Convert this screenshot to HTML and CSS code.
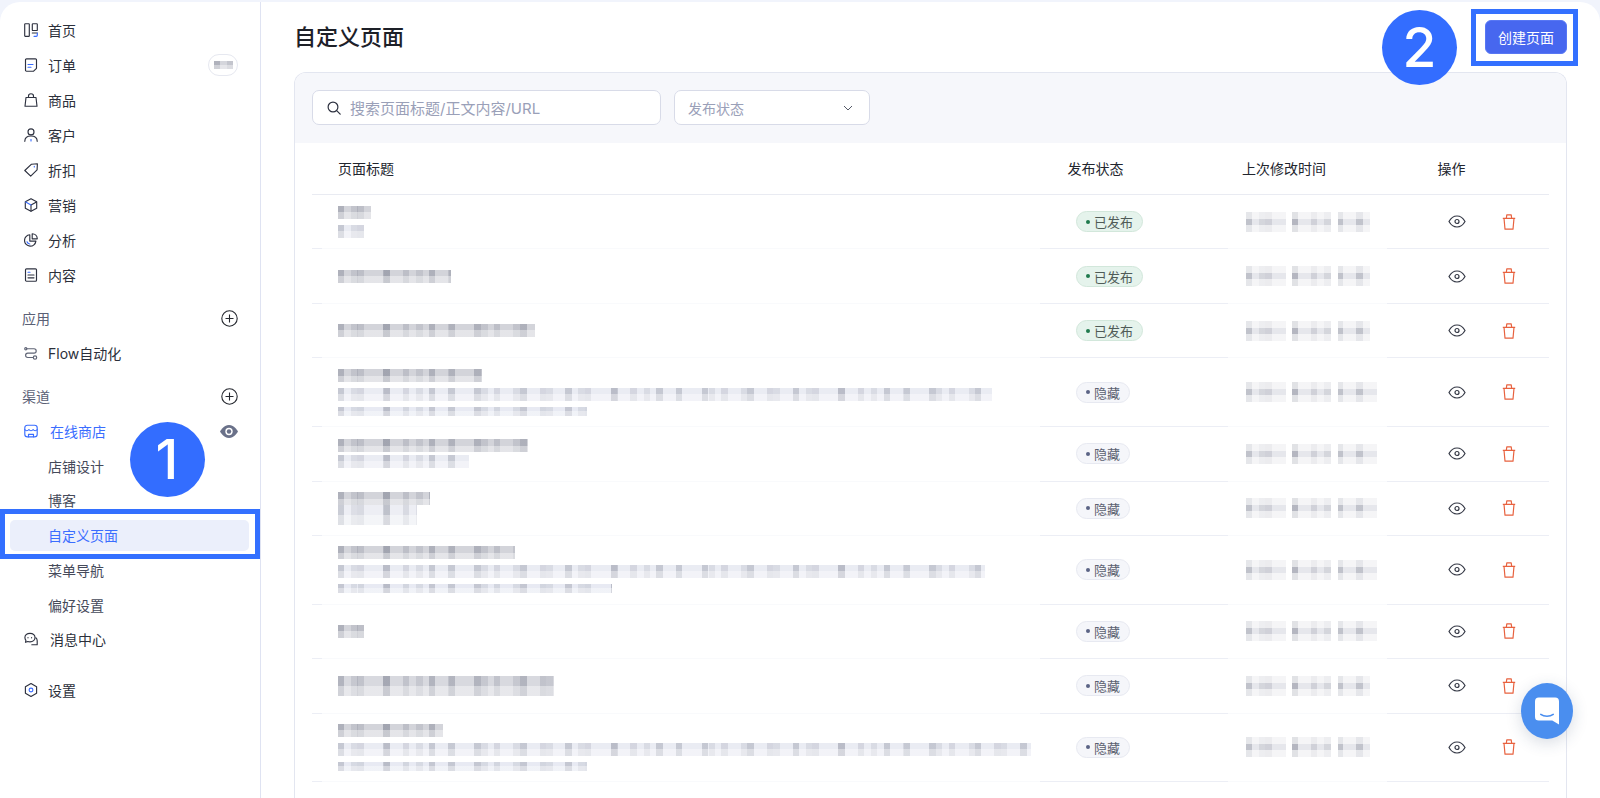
FILE: index.html
```html
<!DOCTYPE html>
<html lang="zh-CN">
<head>
<meta charset="utf-8">
<title>自定义页面</title>
<link rel="stylesheet" href="styles.css">
</head>
<body>
<svg class="defs" width="0" height="0" aria-hidden="true">
  <symbol id="eye" viewBox="0 0 18 13"><path d="M1 6.5S4 1 9 1s8 5.500 8 5.500S14 12 9 12 1 6.500 1 6.500z" fill="none" stroke="currentColor" stroke-width="1.200"/><circle cx="9" cy="6.500" r="2" fill="none" stroke="currentColor" stroke-width="1.200"/></symbol>
  <symbol id="trash" viewBox="0 0 14 16"><path d="M.8 4.300h12.400M2 4.300l1 10.900h8l1-10.900M4.300 4.300l.5-3.400h4.400l.5 3.400" fill="none" stroke="currentColor" stroke-width="1.200" stroke-linejoin="round"/></symbol>
  <symbol id="plus" viewBox="0 0 17 17"><circle cx="8.500" cy="8.500" r="7.700" fill="none" stroke="currentColor" stroke-width="1.100"/><path d="M4.500 8.500h8M8.500 4.500v8" stroke="currentColor" stroke-width="1.100"/></symbol>
</svg>
<div class="app">
  <aside class="sidebar">
    <nav class="nav">
      <a class="nav-item"><svg class="ico" viewBox="0 0 14 14"><rect x=".7" y=".7" width="4.600" height="12.600" rx=".6"/><rect x="8.300" y=".7" width="5" height="6.800" rx=".6"/><path d="M8.300 10h5"/><path class="acc" d="M13.300 10v2.300a1 1 0 01-1 1H10"/></svg><span>首页</span></a>
      <a class="nav-item"><svg class="ico" viewBox="0 0 14 14"><path d="M2.500.8h9a1 1 0 011 1v8.500l-2.900 2.900H2.500a1 1 0 01-1-1V1.800a1 1 0 011-1z"/><path class="acc" d="M4 6.500h5M4 9.200h3"/></svg><span>订单</span><span class="count"><i class="mz mz-count"></i></span></a>
      <a class="nav-item"><svg class="ico" viewBox="0 0 14 14"><path d="M2 4.500h10l1 8.700H1z"/><path d="M4.500 4.500V3a2.500 2.300 0 015 0v1.500"/></svg><span>商品</span></a>
      <a class="nav-item"><svg class="ico" viewBox="0 0 14 14"><circle cx="7" cy="3.900" r="3"/><path d="M.8 13.300c0-3.400 2.600-5.300 6.200-5.300s6.200 1.900 6.200 5.300"/><path class="acc" d="M7 11.500v1.500"/></svg><span>客户</span></a>
      <a class="nav-item"><svg class="ico" viewBox="0 0 14 14"><path d="M.8 7.500 7.500 1.200l5.900-.4-.3 6-6.400 6.400z"/><path class="acc" d="M10.300 3.400v.6"/></svg><span>折扣</span></a>
      <a class="nav-item"><svg class="ico" viewBox="0 0 14 14"><path d="M7 .7l5.700 3.100v6.400L7 13.300l-5.700-3.100V3.800z"/><path d="M7 7l5.500-3M7 7v6"/><path class="acc" d="M1.700 4.100 7 7"/></svg><span>营销</span></a>
      <a class="nav-item"><svg class="ico" viewBox="0 0 14 14"><path d="M5.800 1.800a5.700 5.700 0 106.100 6.300H5.800z"/><path d="M8.200.7a5.300 5.300 0 015.100 5.100H8.200z"/><path class="acc" d="M3 8.800a3.200 3.200 0 002.800 2.200"/></svg><span>分析</span></a>
      <a class="nav-item"><svg class="ico" viewBox="0 0 14 14"><rect x="1.500" y=".8" width="11" height="12.400" rx="1"/><path class="acc" d="M4 4.200h2"/><path d="M4 7h6M4 9.800h6"/></svg><span>内容</span></a>
    </nav>
    <section class="group group-apps">
      <div class="group-head"><span>应用</span><svg class="plus"><use href="#plus"/></svg></div>
      <a class="nav-item"><svg class="ico ico-flow" viewBox="0 0 14 14"><path d="M2.500 2.700h7.500a2.200 2.200 0 010 4.400H3.800a2.200 2.200 0 000 4.400h5"/><circle cx="1.800" cy="2.700" r="1.100"/><circle cx="11" cy="11.500" r="1.700"/></svg><span>Flow自动化</span></a>
    </section>
    <section class="group group-channels">
      <div class="group-head"><span>渠道</span><svg class="plus"><use href="#plus"/></svg></div>
      <a class="nav-item nav-item-wide nav-store"><svg class="ico ico-store" viewBox="0 0 14 14"><rect x=".8" y="1.200" width="12.400" height="11.600" rx="2.600"/><path d="M.8 5.500c1 1.600 3 1.600 4.100 0 1 1.600 3.200 1.600 4.200 0 1 1.600 3.100 1.600 4.100 0M4.500 12.800v-2.500h5v2.500"/></svg><span>在线商店</span><svg class="store-eye" viewBox="0 0 18 13"><path d="M0 6.500S3.500 0 9 0s9 6.500 9 6.500-3.500 6.500-9 6.500S0 6.500 0 6.500z"/><circle cx="9" cy="6.500" r="3.700" fill="#fff"/><circle cx="9" cy="6.500" r="2.200"/></svg></a>
      <a class="sub-item">店铺设计</a>
      <a class="sub-item">博客</a>
      <a class="sub-item sub-active">自定义页面<span class="mark mark-nav"></span></a>
      <a class="sub-item">菜单导航</a>
      <a class="sub-item">偏好设置</a>
      <a class="nav-item nav-item-wide nav-msg"><svg class="ico" viewBox="0 0 14 14"><path d="M6 1.300c2.900 0 5 1.900 5 4.300s-2.100 4.300-5 4.300c-.8 0-1.500-.1-2.100-.4L1.500 10.300l.4-2A4.200 4.200 0 01.9 5.600c0-2.400 2.200-4.300 5.100-4.300z"/><path d="M11.800 5.800c.9.700 1.400 1.700 1.400 2.900v4H7.800"/><path d="M4 5.600v.2M7.600 5.600v.2"/></svg><span>消息中心</span></a>
    </section>
    <a class="nav-item nav-settings"><svg class="ico" viewBox="0 0 14 14"><path d="M7 .6l5.600 3.200v6.400L7 13.400l-5.600-3.200V3.800z"/><circle class="acc" cx="7" cy="7" r="1.900"/></svg><span>设置</span></a>
    <span class="badge badge-one">1</span>
  </aside>

  <main class="main">
    <header class="page-head">
      <h1 class="page-title">自定义页面</h1>
      <div class="create">
        <span class="badge badge-two">2</span>
        <button class="btn-primary" type="button">创建页面</button>
        <span class="mark mark-btn"></span>
      </div>
    </header>

    <section class="card">
      <div class="filters">
        <label class="search">
          <svg class="search-ico" viewBox="0 0 14 14"><circle cx="6" cy="6" r="4.900"/><path d="M9.700 9.700l3.500 3.500"/></svg>
          <span>搜索页面标题/正文内容/URL</span>
        </label>
        <div class="select"><span>发布状态</span><svg class="chev" viewBox="0 0 10 6"><path d="M1 1l4 4 4-4"/></svg></div>
      </div>

      <div class="table">
        <div class="row row-head"><div class="c-title">页面标题</div><div>发布状态</div><div>上次修改时间</div><div>操作</div></div>

        <div class="row">
          <div class="c-title"><i class="mz mz-t" style="width:33px"></i><i class="mz mz-d gap" style="width:26px"></i></div>
          <div class="c-status"><span class="pill pill-on">已发布</span></div>
          <div><i class="mz mz-date" style="width:124px"></i></div>
          <div class="acts"><svg class="eye"><use href="#eye"/></svg><svg class="trash"><use href="#trash"/></svg></div>
        </div>
        <div class="row">
          <div class="c-title"><i class="mz mz-t" style="width:113px"></i></div>
          <div class="c-status"><span class="pill pill-on">已发布</span></div>
          <div><i class="mz mz-date" style="width:124px"></i></div>
          <div class="acts"><svg class="eye"><use href="#eye"/></svg><svg class="trash"><use href="#trash"/></svg></div>
        </div>
        <div class="row">
          <div class="c-title"><i class="mz mz-t" style="width:197px"></i></div>
          <div class="c-status"><span class="pill pill-on">已发布</span></div>
          <div><i class="mz mz-date" style="width:124px"></i></div>
          <div class="acts"><svg class="eye"><use href="#eye"/></svg><svg class="trash"><use href="#trash"/></svg></div>
        </div>
        <div class="row row-tall">
          <div class="c-title"><i class="mz mz-t" style="width:144px"></i><i class="mz mz-d gap" style="width:654px"></i><i class="mz mz-l gap" style="width:249px"></i></div>
          <div class="c-status"><span class="pill">隐藏</span></div>
          <div><i class="mz mz-date" style="width:131px"></i></div>
          <div class="acts"><svg class="eye"><use href="#eye"/></svg><svg class="trash"><use href="#trash"/></svg></div>
        </div>
        <div class="row">
          <div class="c-title"><i class="mz mz-t" style="width:190px"></i><i class="mz mz-d gap-s" style="width:131px"></i></div>
          <div class="c-status"><span class="pill">隐藏</span></div>
          <div><i class="mz mz-date" style="width:131px"></i></div>
          <div class="acts"><svg class="eye"><use href="#eye"/></svg><svg class="trash"><use href="#trash"/></svg></div>
        </div>
        <div class="row">
          <div class="c-title"><i class="mz mz-t" style="width:92px"></i><i class="mz mz-tall" style="width:79px"></i></div>
          <div class="c-status"><span class="pill">隐藏</span></div>
          <div><i class="mz mz-date" style="width:131px"></i></div>
          <div class="acts"><svg class="eye"><use href="#eye"/></svg><svg class="trash"><use href="#trash"/></svg></div>
        </div>
        <div class="row row-tall">
          <div class="c-title"><i class="mz mz-t" style="width:177px"></i><i class="mz mz-d gap" style="width:647px"></i><i class="mz mz-l gap" style="width:274px"></i></div>
          <div class="c-status"><span class="pill">隐藏</span></div>
          <div><i class="mz mz-date" style="width:131px"></i></div>
          <div class="acts"><svg class="eye"><use href="#eye"/></svg><svg class="trash"><use href="#trash"/></svg></div>
        </div>
        <div class="row">
          <div class="c-title"><i class="mz mz-t" style="width:26px"></i></div>
          <div class="c-status"><span class="pill">隐藏</span></div>
          <div><i class="mz mz-date" style="width:131px"></i></div>
          <div class="acts"><svg class="eye"><use href="#eye"/></svg><svg class="trash"><use href="#trash"/></svg></div>
        </div>
        <div class="row">
          <div class="c-title"><i class="mz mz-tall mz-tall-dark" style="width:216px"></i></div>
          <div class="c-status"><span class="pill">隐藏</span></div>
          <div><i class="mz mz-date" style="width:124px"></i></div>
          <div class="acts"><svg class="eye"><use href="#eye"/></svg><svg class="trash"><use href="#trash"/></svg></div>
        </div>
        <div class="row row-tall">
          <div class="c-title"><i class="mz mz-t" style="width:105px"></i><i class="mz mz-d gap" style="width:693px"></i><i class="mz mz-l gap" style="width:249px"></i></div>
          <div class="c-status"><span class="pill">隐藏</span></div>
          <div><i class="mz mz-date" style="width:124px"></i></div>
          <div class="acts"><svg class="eye"><use href="#eye"/></svg><svg class="trash"><use href="#trash"/></svg></div>
        </div>
      </div>
    </section>
  </main>

  <button class="chat" type="button" aria-label="chat">
    <svg viewBox="0 0 25 28"><path d="M4 0h17a4 4 0 014 4v24l-7-4H4a4 4 0 01-4-4V4a4 4 0 014-4z" fill="#fff"/><path d="M6 17.500c3.500 2.600 9.500 2.600 13 0" fill="none" stroke="#4a8eef" stroke-width="1.600" stroke-linecap="round"/></svg>
  </button>
</div>
</body>
</html>
```
FILE: styles.css
```css
* { box-sizing: border-box; }
html, body { margin: 0; height: 100%; }
body {
  background: #f1f4fc;
  font-family: Inter, "Noto Sans CJK SC", sans-serif;
  font-size: 14px;
  color: #2b2f3a;
  overflow: hidden;
}
.defs { position: absolute; }
.app {
  position: relative;
  display: flex;
  height: 796px;
  margin-top: 2px;
  background: #fff;
  border-radius: 20px 20px 0 0;
  overflow: hidden;
}

/* sidebar */
.sidebar {
  position: relative;
  flex: 0 0 261px;
  padding-top: 10.500px;
  border-right: 1px solid #dfe3f2;
}
.nav-item {
  display: flex;
  align-items: center;
  gap: 10px;
  height: 35px;
  padding: 0 22px 0 24px;
}
.nav-item-wide { gap: 12px; }
.ico {
  flex: 0 0 14px;
  width: 14px;
  height: 14px;
  fill: none;
  stroke: #2e3240;
  stroke-width: 1.150;
  stroke-linejoin: round;
  stroke-linecap: round;
}
.ico .acc { stroke: #3a6dff; }
.ico-flow { stroke: #5f6475; }
.ico-store { stroke: #3a6dff; }
.nav-store { color: #3a6dff; position: relative; }
.store-eye {
  margin-left: auto;
  width: 18px;
  height: 13px;
  fill: #6a7189;
}
.count {
  display: flex;
  align-items: center;
  justify-content: center;
  width: 30px;
  height: 22px;
  margin-left: auto;
  border: 1px solid #e6e8f0;
  border-radius: 11px;
}
.group-apps { margin-top: 8.500px; }
.group-apps .group-head { height: 34px; }
.group-channels { margin-top: 8.500px; }
.group-head {
  display: flex;
  align-items: center;
  justify-content: space-between;
  height: 35px;
  padding: 0 22px;
  color: #5a6075;
}
.group-apps .nav-item { margin-bottom: 2px; }
.plus { width: 17px; height: 17px; color: #25282f; }
.sub-item {
  display: flex;
  align-items: center;
  height: 34.600px;
  padding-left: 48px;
  color: #454a5a;
}
.sub-active {
  position: relative;
  height: 31px;
  margin: 2.300px 11px 2px 10px;
  padding-left: 38px;
  border-radius: 5px;
  background: #ebeffb;
  color: #3a6dff;
}
.nav-msg { height: 34.600px; }
.nav-settings { margin-top: 16px; }

/* annotations */
.mark { position: absolute; border: 5px solid #3370ff; pointer-events: none; }
.mark-nav { left: -10px; right: -10.500px; top: -11px; bottom: -8px; }
.mark-btn { left: -14.500px; right: -11px; top: -11px; bottom: -12px; }
.badge {
  position: absolute;
  display: flex;
  align-items: center;
  justify-content: center;
  width: 75px;
  height: 75px;
  border-radius: 50%;
  background: #336dff;
  color: #fff;
  font-family: Inter, sans-serif;
  font-size: 55px;
  font-weight: 550;
  line-height: 1;
}
.badge-one { left: 129.500px; top: 419.500px; }
.badge-two { right: calc(100% + 28px); top: -10.500px; }

/* main */
.main { flex: 1; min-width: 0; padding: 0 33px; }
.page-head {
  display: flex;
  align-items: center;
  justify-content: space-between;
  height: 70px;
}
.page-title { margin: 0; font-size: 22px; font-weight: 500; line-height: 1.3; color: #1d2028; }
.create { position: relative; display: flex; }
.btn-primary {
  width: 82px;
  height: 34px;
  padding: 0;
  border: 1px solid #5877f3;
  border-radius: 6px;
  background: #4767ef;
  color: #fff;
  font: inherit;
}

.card {
  height: 800px;
  border: 1px solid #e3e6f0;
  border-bottom: 0;
  border-radius: 12px 12px 0 0;
  background: #fff;
  overflow: hidden;
}
.filters {
  display: flex;
  gap: 13px;
  height: 70px;
  padding: 17px 17px 18px 17px;
  background: #f6f7fb;
  font-size: 15px;
  color: #9aa0b8;
}
.search, .select {
  display: flex;
  align-items: center;
  height: 35px;
  border: 1px solid #d8dbe8;
  border-radius: 7px;
  background: #fff;
}
.search { flex: 0 0 349px; gap: 9px; padding-left: 14px; }
.search-ico { width: 14px; height: 14px; fill: none; stroke: #2e3240; stroke-width: 1.200; stroke-linecap: round; }
.select { flex: 0 0 196px; justify-content: space-between; padding: 0 16px 0 13px; font-size: 14px; }
.chev { width: 10px; height: 6px; fill: none; stroke: #555a68; stroke-width: 1; }

/* table */
.table { padding: 0 17px; }
.row {
  display: grid;
  grid-template-columns: 755.500px 174.500px 195.500px 1fr;
  align-items: center;
  height: 54.500px;
  padding-bottom: 1.500px;
  background: linear-gradient(to right,
    #eceef5 0 10px, #f9fafc 10px 728px, #eceef5 728px 916px,
    #f9fafc 916px 1075px, #eceef5 1075px) bottom / 100% 1.200px no-repeat;
}
.row-tall { height: 68.700px; }
.row-head {
  height: 52px;
  padding-bottom: 3px;
  background: linear-gradient(#e9ebf2, #e9ebf2) bottom / 100% 1px no-repeat;
  color: #22252e;
}
.c-title { padding-left: 26px; }
.c-status { display: flex; }
.mz { display: block; }
.gap { margin-top: 6px; }
.gap-s { margin-top: 3px; }
.mz {
  background-color: #e9eaef;
  background-image:
    linear-gradient(to bottom, transparent 50%, rgba(255,255,255,.4) 50%),
    repeating-linear-gradient(90deg, rgba(90,95,115,.3) 0 6.500px, transparent 6.500px 19.500px, rgba(90,95,115,.18) 19.500px 26px, transparent 26px 45.500px),
    repeating-linear-gradient(90deg, transparent 0 13px, rgba(90,95,115,.14) 13px 19.500px, transparent 19.500px 32.500px);
}
.mz-t { height: 13px; background-color: #d3d4da; }
.mz-d { height: 13px; background-color: #e7e9f2; opacity: .85; }
.mz-l { height: 9px; background-color: #e4e7f1; opacity: .85; }
.mz-tall { height: 20px; background-color: #e9ebf2; opacity: .8; }
.mz-tall-dark { background-color: #d8d9df; opacity: 1; }
.mz-date {
  height: 20px;
  margin-left: 4px;
  background-color: #e4e5ea;
  opacity: .9;
  background-image:
    linear-gradient(90deg, transparent 40px, #fff 40px 46px, transparent 46px 85px, #fff 85px 92px, transparent 92px),
    linear-gradient(to bottom, rgba(255,255,255,.6) 33%, transparent 33% 66%, rgba(255,255,255,.6) 66%),
    repeating-linear-gradient(90deg, rgba(90,95,115,.3) 0 6.500px, transparent 6.500px 19.500px, rgba(90,95,115,.18) 19.500px 26px, transparent 26px 45.500px),
    repeating-linear-gradient(90deg, transparent 0 13px, rgba(90,95,115,.14) 13px 19.500px, transparent 19.500px 32.500px);
}
.mz-count { width: 19px; height: 8px; background-color: #d5d6dc; }

.pill {
  display: inline-flex;
  align-items: center;
  gap: 4px;
  height: 21px;
  margin-left: 8.500px;
  padding: 0 9px;
  border: 1px solid #e7e9f1;
  border-radius: 11px;
  background: #f5f6fa;
  color: #5b6070;
  font-size: 13px;
}
.pill::before {
  content: "";
  width: 4px;
  height: 4px;
  border-radius: 50%;
  background: #5b6485;
}
.pill-on { background: #e5f3ec; border-color: #d2e7db; color: #4f5b57; }
.pill-on::before { background: #1f7a4d; }

.acts { display: flex; align-items: center; gap: 36px; padding-left: 10px; }
.eye { width: 18px; height: 13px; color: #343845; }
.trash { width: 14px; height: 16px; color: #e8623f; }

.chat {
  position: absolute;
  right: 27px;
  top: 681px;
  display: flex;
  align-items: center;
  justify-content: center;
  width: 52px;
  height: 56px;
  padding: 0;
  border: 0;
  border-radius: 50%;
  background: #4a8eef;
  box-shadow: 0 4px 16px rgba(40, 60, 100, .18);
}
.chat svg { width: 24px; height: 28px; }
```
